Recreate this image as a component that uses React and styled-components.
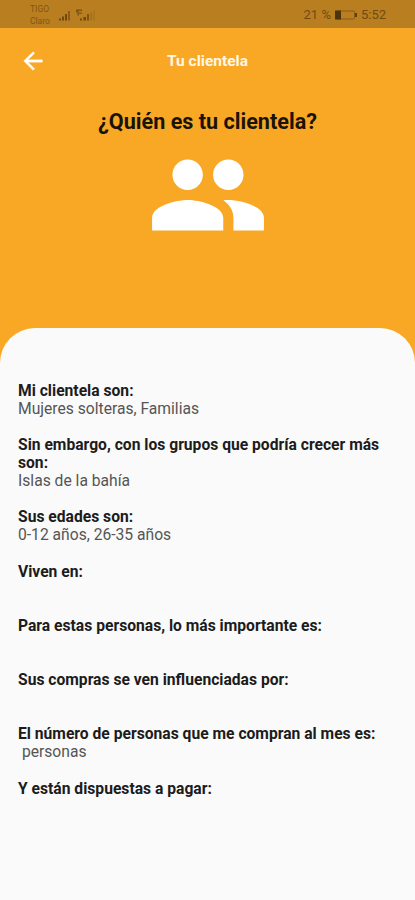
import styled, { createGlobalStyle } from 'styled-components';

const answers = [
  { title: 'Mi clientela son:', text: 'Mujeres solteras, Familias' },
  {
    title: 'Sin embargo, con los grupos que podría crecer más son:',
    text: 'Islas de la bahía',
  },
  { title: 'Sus edades son:', text: '0-12 años, 26-35 años' },
  { title: 'Viven en:', text: '' },
  { title: 'Para estas personas, lo más importante es:', text: '' },
  { title: 'Sus compras se ven influenciadas por:', text: '' },
  {
    title: 'El número de personas que me compran al mes es:',
    text: ' personas',
  },
  { title: 'Y están dispuestas a pagar:', text: '' },
];

export default function App() {
  return (
    <Screen>
      <GlobalStyle />
      <StatusBar>
        <Carriers>
          <span>TIGO</span>
          <span>Claro</span>
        </Carriers>
        <Signals />
        <StatusRight>
          <span>21 %</span>
          <Battery />
          <span>5:52</span>
        </StatusRight>
      </StatusBar>

      <AppBar>
        <BackButton aria-label="Volver">
          <BackArrow />
        </BackButton>
        <BarTitle>Tu clientela</BarTitle>
      </AppBar>

      <Header>
        <Question>¿Quién es tu clientela?</Question>
        <PeopleIcon />
      </Header>

      <Sheet>
        {answers.map(({ title, text }) => (
          <Answer key={title}>
            <AnswerTitle>{title}</AnswerTitle>
            <AnswerText>{text}</AnswerText>
          </Answer>
        ))}
      </Sheet>
    </Screen>
  );
}

function BackArrow() {
  return (
    <svg
      width="28"
      height="28"
      viewBox="0 0 24 24"
      fill="currentColor"
      stroke="currentColor"
      strokeWidth="0.3"
    >
      <path d="M20 11H7.83l5.59-5.59L12 4l-8 8 8 8 1.41-1.41L7.83 13H20v-2z" />
    </svg>
  );
}

function Signals() {
  return (
    <svg width="40" height="16" viewBox="0 0 40 16" fill="#6d4a12">
      <path d="M1 11.5h2v2H1zM4 9.5h2v4H4zM7 7h2v6.5H7z" />
      <path d="M10 4h2v9.5h-2z" opacity="0.65" />
      <path d="M18 2.5h6V4h-3.5v1.5H24v1.3h-3V8.5h-1.5v-3H18z" opacity="0.8" />
      <path d="M22 11.5h2v2h-2zM25.5 10H28v3.5h-2.500z" />
      <path d="M29 7h2v6.5h-2z" opacity="0.8" />
      <path d="M32.5 5.5H34v8h-1.5zM35.5 3.5h1v10h-1z" opacity="0.3" />
    </svg>
  );
}

function Battery() {
  return (
    <svg width="22" height="10" viewBox="0 0 22 10">
      <rect x="1" y="1" width="18.5" height="8" rx="1" fill="none" stroke="#8a5d17" />
      <path d="M0 .5h6v9H0z" fill="#4d340d" />
      <path d="M20 3h2v4h-2z" fill="#5d4010" />
    </svg>
  );
}

function PeopleIcon() {
  return (
    <svg width="122" height="122" viewBox="0 0 24 24" fill="#fff">
      <path d="M16 11c1.66 0 2.99-1.34 2.99-3S17.66 5 16 5s-3 1.34-3 3 1.34 3 3 3zm-8 0c1.66 0 2.99-1.34 2.99-3S9.66 5 8 5 5 6.34 5 8s1.34 3 3 3zm0 2c-2.33 0-7 1.17-7 3.5V19h14v-2.5c0-2.33-4.67-3.5-7-3.5zm8 0c-.29 0-.62.02-.97.05 1.16.84 1.97 1.97 1.97 3.45V19h6v-2.5c0-2.33-4.67-3.5-7-3.5z" />
    </svg>
  );
}

//Styled-Component
const GlobalStyle = createGlobalStyle`
  * {
    box-sizing: border-box;
  }

  body {
    margin: 0;
    font-family: Roboto, sans-serif;
  }
`;

const Screen = styled.div`
  display: flex;
  flex-direction: column;
  height: 900px;
  overflow: hidden;
  background: #f9a825;
`;

const StatusBar = styled.div`
  display: flex;
  align-items: center;
  flex: none;
  height: 28px;
  padding: 1px 29px 0 30px;
  background: #b97e20;
  color: #704c13;
`;

const Carriers = styled.div`
  display: flex;
  flex-direction: column;
  width: 28px;
  font-size: 8.5px;
  line-height: 12px;
  color: #82580f;
`;

const StatusRight = styled.div`
  display: flex;
  align-items: center;
  gap: 4px;
  margin-left: auto;
  font-size: 13px;
`;

const AppBar = styled.div`
  display: grid;
  grid-template-columns: 66px 1fr 66px;
  align-items: center;
  flex: none;
  height: 65px;
  color: #fff;
`;

const BackButton = styled.button`
  display: flex;
  justify-content: center;
  padding: 0;
  border: 0;
  background: none;
  color: inherit;
`;

const BarTitle = styled.h1`
  margin: 0;
  text-align: center;
  font-size: 15.5px;
  font-weight: 700;
  color: #fff7e8;
`;

const Header = styled.div`
  display: flex;
  flex-direction: column;
  align-items: center;
  flex: none;
  height: 235px;
  padding-top: 16px;
`;

const Question = styled.h2`
  margin: 0 0 -1px;
  font-size: 21.6px;
  line-height: 26px;
  font-weight: 700;
  color: #1a1408;
`;

const Sheet = styled.main`
  flex: 1;
  padding: 53.7px 18px 0;
  border-radius: 35px 35px 0 0;
  background: #fafafa;
`;

const Answer = styled.section`
  margin-bottom: 18.1px;
  font-size: 15.65px;
  line-height: 18.08px;
`;

const AnswerTitle = styled.h3`
  margin: 0;
  font-size: inherit;
  font-weight: 700;
  color: #1c1c1c;
`;

const AnswerText = styled.p`
  min-height: 18.08px;
  margin: 0;
  white-space: pre-wrap;
  color: #555;
`;
